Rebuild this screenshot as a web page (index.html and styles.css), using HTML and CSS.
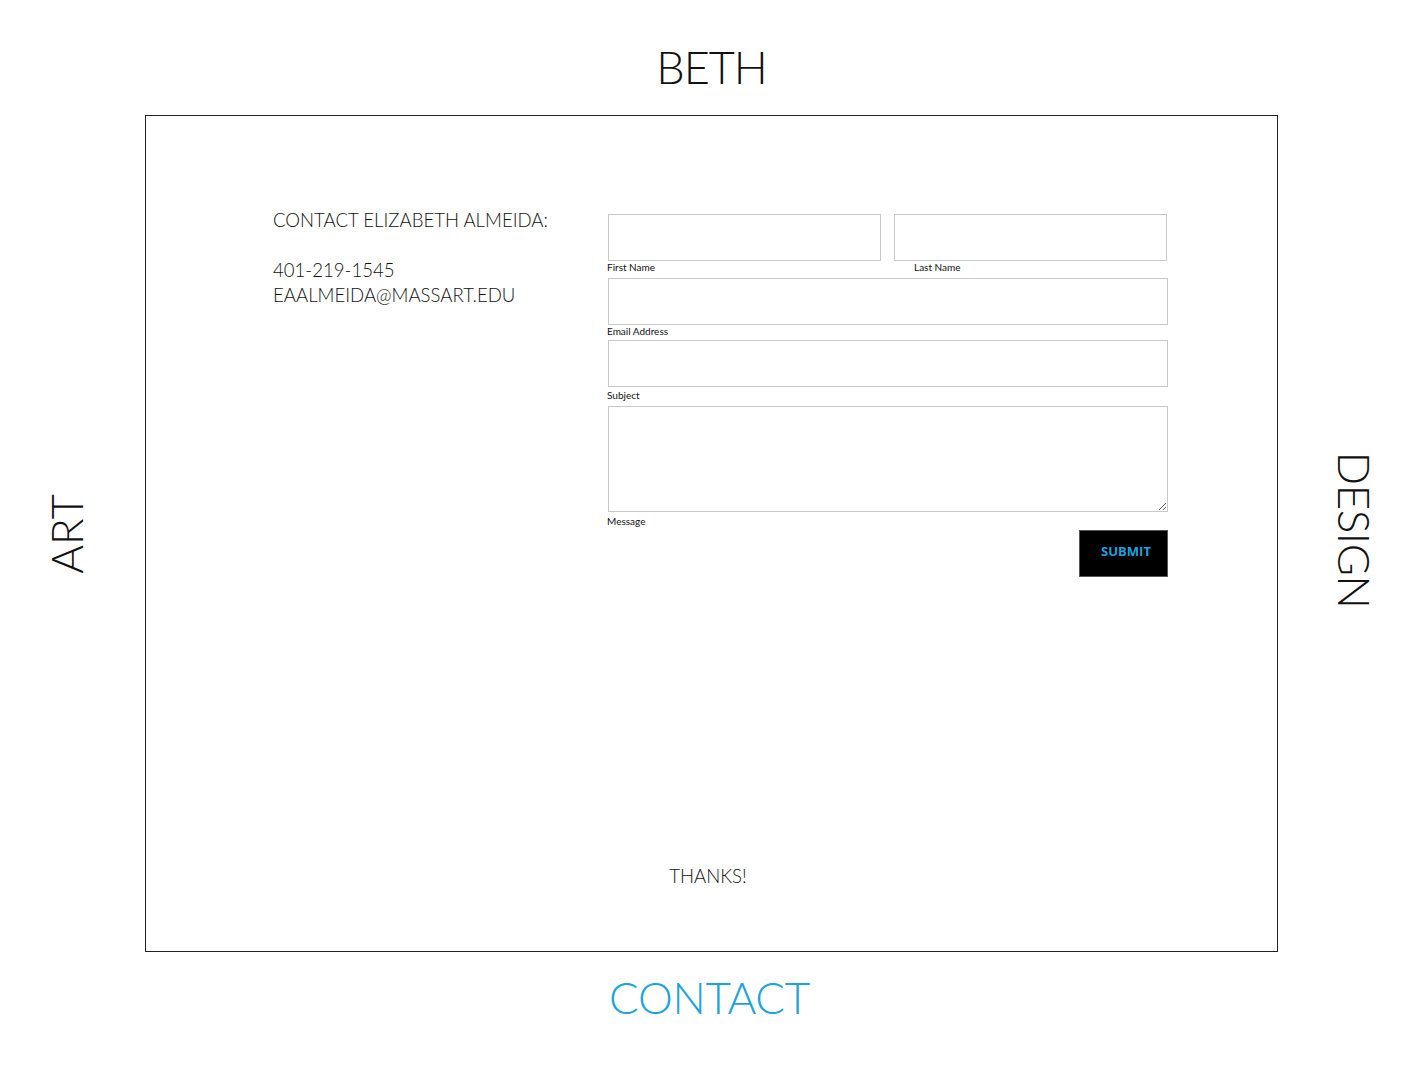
FILE: index.html
```html
<!DOCTYPE html>
<html>
<head>
<meta charset="utf-8">
<link rel="stylesheet" href="styles.css">
</head>
<body>
<div class="page">
  <header class="top"><h1 class="title">BETH</h1></header>
  <div class="middle">
    <div class="side side-left"><span class="vert vert-left">ART</span></div>
    <main class="box">
      <div class="content">
        <div class="info">
          <p class="info-head">CONTACT ELIZABETH ALMEIDA:</p>
          <p class="info-line">401-219-1545<br>EAALMEIDA@MASSART.EDU</p>
        </div>
        <form class="form">
          <div class="row">
            <div class="field half">
              <input class="inp" type="text">
              <label class="lbl">First Name</label>
            </div>
            <div class="field half">
              <input class="inp" type="text">
              <label class="lbl lbl-indent">Last Name</label>
            </div>
          </div>
          <div class="field">
            <input class="inp" type="email">
            <label class="lbl lbl-short">Email Address</label>
          </div>
          <div class="field">
            <input class="inp" type="text">
            <label class="lbl lbl-tall">Subject</label>
          </div>
          <div class="field">
            <textarea class="inp area"></textarea>
            <label class="lbl lbl-msg">Message</label>
          </div>
          <div class="actions"><button class="submit" type="button">SUBMIT</button></div>
        </form>
      </div>
      <p class="thanks">THANKS!</p>
    </main>
    <div class="side side-right"><span class="vert vert-right">DESIGN</span></div>
  </div>
  <footer class="bottom"><span class="contact">CONTACT</span></footer>
</div>
</body>
</html>
```
FILE: styles.css
```css
html, body { margin: 0; padding: 0; background: #fff; }
body { font-family: "Lato", "Open Sans", sans-serif; font-weight: 300; color: #111; }
.page { width: 1423px; height: 1067px; display: flex; flex-direction: column; }
.top { height: 115px; display: flex; justify-content: center; align-items: flex-start; }
.title { margin: 0; padding-top: 39px; font-size: 45px; font-weight: 300; line-height: 56px; letter-spacing: -1px; color: #111; }
.middle { display: flex; height: 837px; }
.side { width: 145px; display: flex; align-items: center; justify-content: center; }
.vert { font-size: 44px; font-weight: 300; line-height: 1; white-space: nowrap; color: #111; }
.vert-left { transform: translate(-7px, 0) rotate(-90deg); }
.vert-right { transform: translate(5px, -4px) rotate(90deg); letter-spacing: -0.5px; }
.box { width: 1133px; box-sizing: border-box; border: 1.5px solid #222; display: flex; flex-direction: column; }
.content { display: flex; padding: 92px 0 0 127px; }
.info { width: 335px; }
.info-head { margin: 0; font-size: 18.6px; line-height: 25px; }
.info-line { margin: 25px 0 0; font-size: 18.6px; line-height: 25px; }
.form { width: 560px; display: flex; flex-direction: column; padding-top: 6px; }
.row { display: flex; gap: 13px; width: 559px; }
.field { display: flex; flex-direction: column; }
.half { flex: 1; }
.inp { box-sizing: border-box; height: 47px; width: 100%; border: 1px solid #c9c9c9; margin: 0; padding: 4px; font-family: inherit; background: #fff; }
.area { height: 106px; resize: vertical; }
.lbl { font-size: 10px; line-height: 13px; height: 17px; font-weight: 400; color: #111; margin-left: -1px; }
.lbl-short { height: 15px; }
.lbl-tall { height: 19px; line-height: 17px; }
.lbl-msg { line-height: 19px; height: 18px; }
.lbl-indent { padding-left: 21px; }
.actions { display: flex; justify-content: flex-end; margin-top: 0; }
.submit { width: 89px; height: 47px; background: #000; color: #1ba3dc; border: 1px solid #555; font-family: "Open Sans", sans-serif; font-weight: 700; font-size: 13px; padding: 0 0 5px 5px; }
.thanks { margin: auto 0 0; padding: 0 7px 62px 0; text-align: center; font-size: 18.6px; line-height: 25px; letter-spacing: 0; }
.bottom { flex: 1; display: flex; justify-content: center; }
.contact { font-size: 44px; font-weight: 300; color: #1ba3dc; line-height: 56px; padding: 17px 4px 0 0; letter-spacing: -0.3px; }
```
